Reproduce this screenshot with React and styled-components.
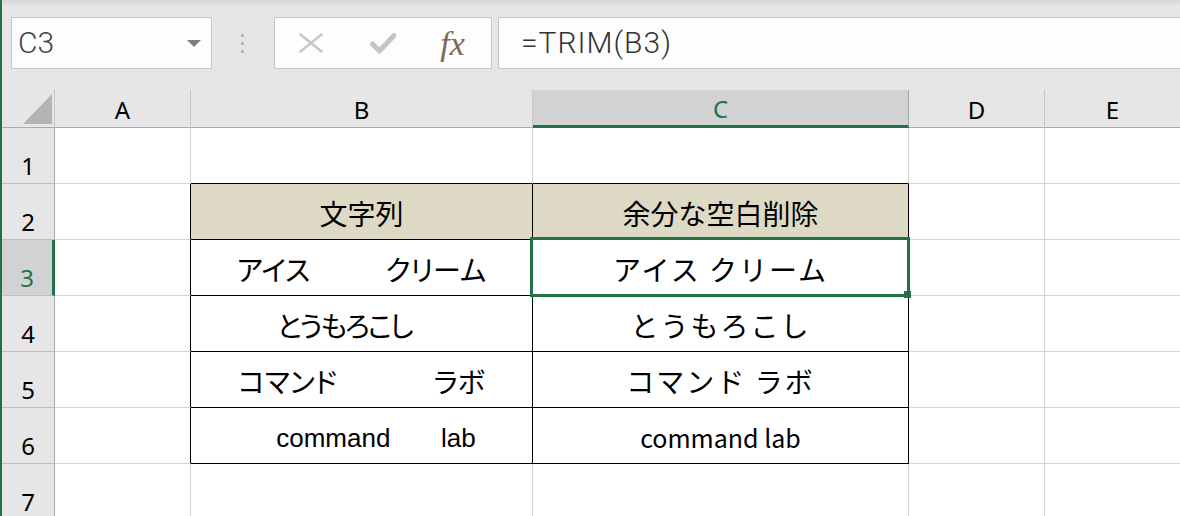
// Modules
import styled, { createGlobalStyle, css } from 'styled-components';

const GREEN = '#217346';
const GRID = '#d4d4d4';
const INK = '#000';
const IDEO = '\u3000';

const columns = [
  { key: 'A', width: 136 },
  { key: 'B', width: 342 },
  { key: 'C', width: 376 },
  { key: 'D', width: 136 },
  { key: 'E', width: 136 },
];

// spacing: letter-spacing per column for that row (the source cells use different fonts)
const rows = [
  { n: 1, cells: {} },
  { n: 2, cells: { B: '文字列', C: '余分な空白削除' } },
  {
    n: 3,
    cells: { B: `アイス${IDEO}${IDEO}   クリーム`, C: 'アイス クリーム' },
    spacing: { C: 2 },
  },
  {
    n: 4,
    cells: { B: `とうもろこし${IDEO}  `, C: 'とうもろこし' },
    spacing: { B: -2, C: 2 },
  },
  {
    n: 5,
    cells: { B: `コマンド${IDEO}${IDEO}${IDEO}  ラボ`, C: 'コマンド ラボ' },
    spacing: { C: 2 },
  },
  { n: 6, cells: { B: '    command       lab', C: 'command lab' }, latin: true },
  { n: 7, cells: {} },
];

const inTable = (col, n) => (col === 'B' || col === 'C') && n >= 2 && n <= 6;

function App() {
  const active = { col: 'C', row: 3 };

  return (
    <>
      <GlobalStyle />
      <Window>
        <Toolbar>
          <NameBox>
            <NameText>C3</NameText>
            <svg width="14" height="7" viewBox="0 0 14 7">
              <polygon points="0,0 14,0 7,7" fill="#7f7f7f" />
            </svg>
          </NameBox>
          <Grip>
            <Dot />
            <Dot />
            <Dot />
          </Grip>
          <FnBox>
            <FnButton>
              <svg width="24" height="20" viewBox="0 0 24 20">
                <path
                  d="M1.5 1.5 L22.5 18.5 M22.5 1.5 L1.5 18.5"
                  stroke="#c8c8c8"
                  strokeWidth="2.6"
                  strokeLinecap="round"
                  fill="none"
                />
              </svg>
            </FnButton>
            <FnButton>
              <svg width="26" height="21" viewBox="0 0 26 21">
                <path
                  d="M2.5 11 L9.5 18 L24 2.5"
                  stroke="#c4c4c4"
                  strokeWidth="5"
                  strokeLinecap="round"
                  strokeLinejoin="round"
                  fill="none"
                />
              </svg>
            </FnButton>
            <FnButton>
              <FxLabel>fx</FxLabel>
            </FnButton>
          </FnBox>
          <FormulaInput>=TRIM(B3)</FormulaInput>
        </Toolbar>

        <Sheet>
          <Corner>
            <svg width="29" height="30" viewBox="0 0 29 30">
              <polygon points="29,0 29,30 0,30" fill="#b4b4b4" />
            </svg>
          </Corner>
          {columns.map((c) => (
            <ColHead key={c.key} $active={c.key === active.col}>
              {c.key}
            </ColHead>
          ))}

          {rows.map((row) => (
            <Row key={row.n}>
              <RowHead $active={row.n === active.row}>{row.n}</RowHead>
              {columns.map((c) => {
                const selected = c.key === active.col && row.n === active.row;
                const rightEdge =
                  inTable(c.key, row.n) || (c.key === 'A' && inTable('B', row.n));
                const bottomEdge =
                  inTable(c.key, row.n) || inTable(c.key, row.n + 1);
                return (
                  <Cell
                    key={c.key}
                    $right={rightEdge ? INK : GRID}
                    $bottom={bottomEdge ? INK : GRID}
                    $fill={row.n === 2 && inTable(c.key, row.n) ? '#ddd9c4' : '#fff'}
                    $proportional={c.key === 'B'}
                    $latin={row.latin ? c.key : null}
                    $spacing={(row.spacing && row.spacing[c.key]) || 0}
                    $selected={selected}
                  >
                    {row.cells[c.key] || ''}
                    {selected && (
                      <>
                        <Selection />
                        <FillHandle />
                      </>
                    )}
                  </Cell>
                );
              })}
            </Row>
          ))}
        </Sheet>
      </Window>
    </>
  );
}

const GlobalStyle = createGlobalStyle`
  html, body {
    margin: 0;
    padding: 0;
    background: #e6e6e6;
    overflow: hidden;
  }
`;

const Window = styled.div`
  width: 1178px;
  height: 516px;
  border-left: 2px solid ${GREEN};
  overflow: hidden;
  background: #e6e6e6;
`;

const Toolbar = styled.div`
  display: flex;
  align-items: stretch;
  height: 52px;
  padding: 17px 0 21px 9px;
  background: linear-gradient(to bottom, #d6d6d6 0, #e6e6e6 6px);
`;

const boxed = css`
  box-sizing: border-box;
  background: #fdfdfd;
  border: 1px solid #c6c6c6;
`;

const NameBox = styled.div`
  ${boxed};
  width: 201px;
  display: flex;
  align-items: center;
  justify-content: space-between;
  padding: 0 10px 0 6px;
`;

const NameText = styled.span`
  font: 300 30px/1 Roboto, sans-serif;
  color: #444;
`;

const Grip = styled.div`
  width: 61px;
  display: flex;
  flex-direction: column;
  align-items: center;
  justify-content: center;
  gap: 5px;
  padding-right: 1px;
`;

const Dot = styled.span`
  width: 3px;
  height: 3px;
  background: #b6b6b6;
`;

const FnBox = styled.div`
  ${boxed};
  width: 218px;
  display: flex;
  align-items: center;
  justify-content: space-around;
`;

const FnButton = styled.div`
  width: 30px;
  display: flex;
  justify-content: center;
`;

const FxLabel = styled.span`
  font: italic 34px/1 'Liberation Serif', serif;
  color: #7b6757;
  margin: 2px 5px 0 0;
`;

const FormulaInput = styled.div`
  ${boxed};
  flex: 1;
  margin-left: 6px;
  margin-right: -2px;
  display: flex;
  align-items: center;
  padding-left: 22px;
  font: 300 30px/1 Roboto, sans-serif;
  letter-spacing: 1px;
  color: #333;
`;

const Sheet = styled.div`
  display: grid;
  grid-template-columns: 53px ${columns.map((c) => `${c.width}px`).join(' ')};
  grid-auto-rows: 56px;
  grid-template-rows: 38px;
  background: #fff;
`;

const Row = styled.div`
  display: contents;
`;

const headBase = css`
  box-sizing: border-box;
  display: flex;
  justify-content: center;
  font: 24px/1 'Noto Sans', sans-serif;
`;

const Corner = styled.div`
  box-sizing: border-box;
  display: flex;
  align-items: flex-end;
  justify-content: flex-end;
  padding: 0 2px 3px 0;
  background: #e6e6e6;
  border-right: 1px solid #c6c6c6;
  border-bottom: 1px solid #ababab;
`;

const ColHead = styled.div`
  ${headBase};
  align-items: center;
  padding-top: 2px;
  background: ${(p) => (p.$active ? '#d2d2d2' : '#e6e6e6')};
  border-right: 1px solid ${(p) => (p.$active ? '#a6a6a6' : '#c6c6c6')};
  border-bottom: ${(p) => (p.$active ? `3px solid ${GREEN}` : '1px solid #ababab')};
  color: ${(p) => (p.$active ? GREEN : '#000')};
`;

const RowHead = styled.div`
  ${headBase};
  align-items: flex-end;
  padding-bottom: 5px;
  background: ${(p) => (p.$active ? '#d2d2d2' : '#e6e6e6')};
  border-right: ${(p) => (p.$active ? `3px solid ${GREEN}` : '1px solid #ababab')};
  border-bottom: 1px solid #bfbfbf;
  color: ${(p) => (p.$active ? GREEN : '#000')};
`;

const Cell = styled.div`
  position: ${(p) => (p.$selected ? 'relative' : 'static')};
  box-sizing: border-box;
  display: flex;
  align-items: flex-end;
  justify-content: center;
  padding-bottom: 12px;
  background: ${(p) => p.$fill};
  border-right: 1px solid ${(p) => p.$right};
  border-bottom: 1px solid ${(p) => p.$bottom};
  color: #000;
  white-space: pre;
  font: 28px/1 'Noto Sans CJK JP', sans-serif;
  letter-spacing: ${(p) => p.$spacing}px;
  ${(p) =>
    p.$proportional &&
    css`
      font-feature-settings: 'palt' 1;
    `}
  ${(p) =>
    p.$latin === 'B' &&
    css`
      font: 26px/1 'Liberation Sans', sans-serif;
    `}
  ${(p) =>
    p.$latin === 'C' &&
    css`
      font-size: 25px;
      padding-bottom: 13px;
    `}
`;

const Selection = styled.div`
  position: absolute;
  left: -3px;
  top: -3px;
  right: -2px;
  bottom: -2px;
  border: 3px solid ${GREEN};
  z-index: 2;
  pointer-events: none;
`;

const FillHandle = styled.div`
  position: absolute;
  right: -3px;
  bottom: -3px;
  width: 7px;
  height: 7px;
  background: ${GREEN};
  z-index: 3;
`;

export default App;
